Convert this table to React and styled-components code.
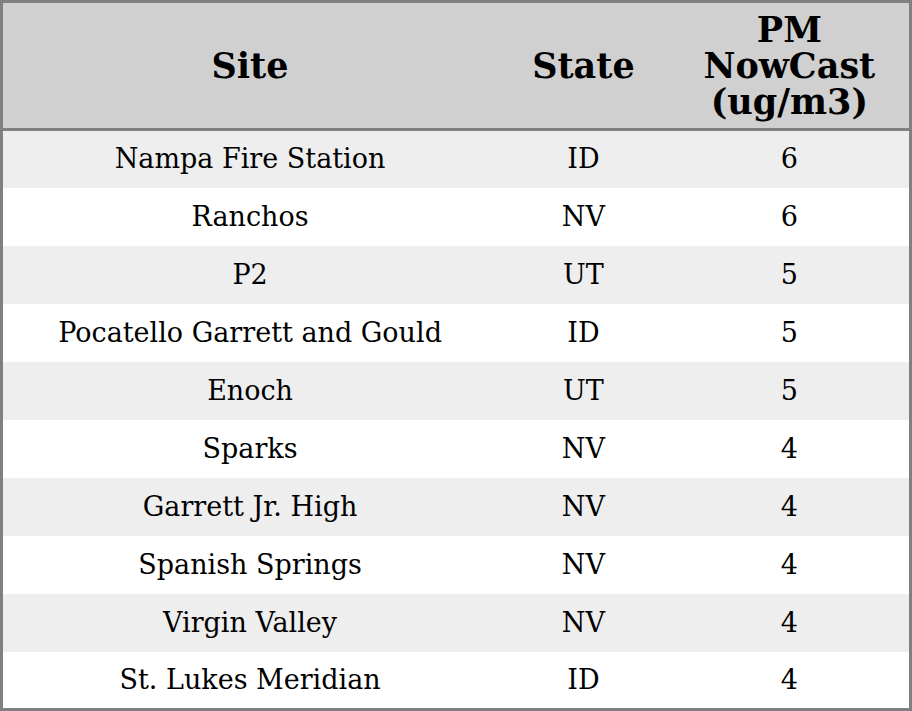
import React from "react";
import styled, { createGlobalStyle } from "styled-components";

const Global = createGlobalStyle`
  html, body { margin: 0; padding: 0; background: #ffffff; }
  body { font-family: "DejaVu Serif", "Liberation Serif", serif; color: #000; }
`;

const Table = styled.table`
  width: 912px;
  border-collapse: collapse;
  table-layout: fixed;
  border: 3px solid #808080;
  box-sizing: border-box;
`;

const HeadRow = styled.tr`
  height: 128px;
`;

const HeadCell = styled.th`
  background: #d0d0d0;
  font-size: 35px;
  font-weight: bold;
  line-height: 36px;
  padding: 0 8px;
  text-align: center;
  vertical-align: middle;
  border-bottom: 3px solid #808080;
`;

const Row = styled.tr`
  height: 58px;
  background: ${(p) => (p.$alt ? "#eeeeee" : "#ffffff")};
`;

const Cell = styled.td`
  font-size: 27px;
  line-height: 30px;
  padding: 0 8px;
  text-align: center;
  vertical-align: middle;
`;

const rows = [
  ["Nampa Fire Station", "ID", 6],
  ["Ranchos", "NV", 6],
  ["P2", "UT", 5],
  ["Pocatello Garrett and Gould", "ID", 5],
  ["Enoch", "UT", 5],
  ["Sparks", "NV", 4],
  ["Garrett Jr. High", "NV", 4],
  ["Spanish Springs", "NV", 4],
  ["Virgin Valley", "NV", 4],
  ["St. Lukes Meridian", "ID", 4],
];

export default function App() {
  return (
    <>
      <Global />
      <Table>
        <colgroup>
          <col style={{ width: 494 }} />
          <col style={{ width: 172 }} />
          <col style={{ width: 240 }} />
        </colgroup>
        <thead>
          <HeadRow>
            <HeadCell>Site</HeadCell>
            <HeadCell>State</HeadCell>
            <HeadCell>
              PM
              <br />
              NowCast
              <br />
              (ug/m3)
            </HeadCell>
          </HeadRow>
        </thead>
        <tbody>
          {rows.map((r, i) => (
            <Row key={r[0]} $alt={i % 2 === 0}>
              <Cell>{r[0]}</Cell>
              <Cell>{r[1]}</Cell>
              <Cell>{r[2]}</Cell>
            </Row>
          ))}
        </tbody>
      </Table>
    </>
  );
}
